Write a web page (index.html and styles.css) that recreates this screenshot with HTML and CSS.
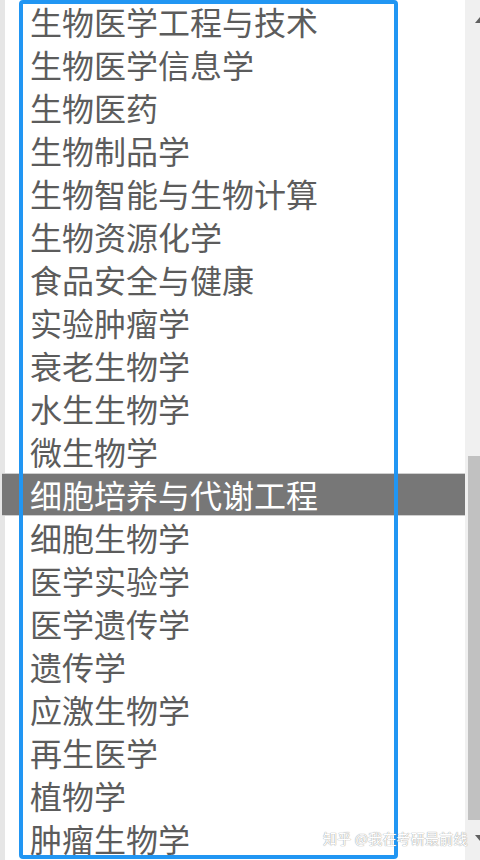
FILE: index.html
```
<!DOCTYPE html>
<html lang="zh-CN">
<head>
<meta charset="utf-8">
<link rel="stylesheet" href="styles.css">
</head>
<body>
<div class="window">
  <div class="list">
    <div class="item">生物医学工程与技术</div>
    <div class="item">生物医学信息学</div>
    <div class="item">生物医药</div>
    <div class="item">生物制品学</div>
    <div class="item">生物智能与生物计算</div>
    <div class="item">生物资源化学</div>
    <div class="item">食品安全与健康</div>
    <div class="item">实验肿瘤学</div>
    <div class="item">衰老生物学</div>
    <div class="item">水生生物学</div>
    <div class="item">微生物学</div>
    <div class="item selected">细胞培养与代谢工程</div>
    <div class="item">细胞生物学</div>
    <div class="item">医学实验学</div>
    <div class="item">医学遗传学</div>
    <div class="item">遗传学</div>
    <div class="item">应激生物学</div>
    <div class="item">再生医学</div>
    <div class="item">植物学</div>
    <div class="item">肿瘤生物学</div>
  </div>
  <div class="scrollbar">
    <svg class="arrow up" width="10" height="6" viewBox="0 0 10 6"><path d="M0 6 L5 0 L10 6 Z" fill="#606060"/></svg>
    <div class="track-top"></div>
    <div class="thumb"></div>
    <svg class="arrow down" width="10" height="6" viewBox="0 0 10 6"><path d="M0 0 L5 6 L10 0 Z" fill="#606060"/></svg>
  </div>
  <div class="highlight-box"></div>
  <div class="watermark">知乎 @我在考研最前线</div>
</div>
</body>
</html>
```
FILE: styles.css
```
html, body {
  margin: 0;
  padding: 0;
  width: 480px;
  height: 860px;
  overflow: hidden;
  background: #ffffff;
}

.window {
  position: relative;
  display: flex;
  width: 480px;
  height: 860px;
  font-family: "Microsoft YaHei", "Noto Sans CJK SC", sans-serif;
}

.list {
  width: 465px;
  height: 860px;
  border-left: 5px solid #e6e6e6;
  box-sizing: border-box;
  display: flex;
  flex-direction: column;
}

.item {
  height: 43px;
  line-height: 43px;
  font-size: 32px;
  color: #5c5c5c;
  padding-left: 25px;
  white-space: nowrap;
  box-sizing: border-box;
}

.item.selected {
  background: #777777;
  color: #ffffff;
  margin-left: -3px;
  padding-left: 28px;
  border-top: 1px solid #cfcfcf;
  line-height: 41px;
  border-bottom: 1px solid #cfcfcf;
}

.scrollbar {
  width: 15px;
  height: 860px;
  background: #f0f0f0;
  display: flex;
  flex-direction: column;
  align-items: flex-end;
  overflow: hidden;
}

.arrow {
  flex: none;
  margin-right: -5px;
}

.arrow.up {
  margin-top: 17px;
}

.track-top {
  height: 433px;
  flex: none;
}

.thumb {
  width: 12px;
  height: 364px;
  background: #c1c1c1;
  flex: none;
}

.arrow.down {
  margin-top: 15px;
}

.highlight-box {
  position: absolute;
  left: 19px;
  top: 0;
  width: 379px;
  height: 859px;
  border: 4px solid #2196f3;
  border-radius: 4px;
  box-sizing: border-box;
  pointer-events: none;
}

.watermark {
  position: absolute;
  left: 323px;
  top: 828px;
  font-size: 14px;
  line-height: 20px;
  color: #ffffff;
  text-shadow: 0 0 1px #999, 0 0 1px #aaa;
  letter-spacing: 0.2px;
  white-space: nowrap;
}
```
